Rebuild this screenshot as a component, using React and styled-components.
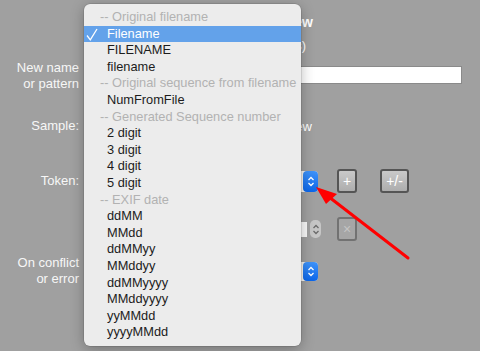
import React from 'react';
import styled, { createGlobalStyle } from 'styled-components';

const GlobalStyle = createGlobalStyle`
  html, body {
    margin: 0;
    padding: 0;
    background: #a0a0a0;
  }
`;

const Page = styled.div`
  position: relative;
  width: 480px;
  height: 351px;
  overflow: hidden;
  background: #a0a0a0;
  font-family: "Liberation Sans", Arial, sans-serif;
  font-size: 13px;
  color: #ffffff;
`;

const Dialog = styled.div`
  display: flex;
  flex-direction: column;
`;

const Row = styled.div`
  display: grid;
  grid-template-columns: 80px 1fr;
  column-gap: 10px;
  align-items: center;
  height: ${(p) => p.$h}px;
  margin-top: ${(p) => p.$mt}px;
`;

const Label = styled.div`
  text-align: right;
  padding-right: 1px;
  line-height: 16px;
  color: #f7f7f7;
`;

const Title = styled.div`
  width: 223px;
  text-align: right;
  font-weight: 700;
  font-size: 14px;
`;

const Sub = styled.div`
  width: 216px;
  text-align: right;
`;

const SampleText = styled.div`
  width: 222px;
  text-align: right;
`;

const TextInput = styled.div`
  align-self: start;
  margin-top: 6px;
  width: 372px;
  height: 18px;
  box-sizing: border-box;
  background: #ffffff;
  border: 1px solid #8a8a8a;
`;

const Controls = styled.div`
  display: flex;
  align-items: center;
`;

const Popup = styled.div`
  display: flex;
  justify-content: flex-end;
  width: 228px;
  height: ${(p) => p.$h}px;
  background: #fbf6ef;
  border-radius: 4px;
`;

const Stepper = styled.div`
  width: 15px;
  height: 100%;
  border-radius: 4px;
  background: linear-gradient(#3f93f9, #0b66ea);
  display: flex;
  align-items: center;
  justify-content: center;
`;

const Field = styled.div`
  width: 217px;
  height: 15px;
  background: #fafafa;
`;

const SmallStepper = styled.div`
  width: 11px;
  height: 18px;
  margin-left: 3px;
  border-radius: 5px;
  background: #c6c6c6;
  display: flex;
  align-items: center;
  justify-content: center;
`;

const Button = styled.div`
  width: ${(p) => p.$w}px;
  height: 24px;
  margin-left: ${(p) => p.$ml}px;
  box-sizing: border-box;
  border: 2px solid ${(p) => (p.$disabled ? '#727272' : '#555555')};
  border-radius: 3px;
  background: ${(p) => (p.$disabled ? '#a6a6a6' : 'linear-gradient(#c9c9c9, #adadad)')};
  color: ${(p) => (p.$disabled ? '#c4c4c4' : '#ffffff')};
  font-size: 14px;
  display: flex;
  align-items: center;
  justify-content: center;
`;

const Menu = styled.div`
  position: absolute;
  left: 84px;
  top: 4px;
  width: 217px;
  padding: 5px 0;
  background: #ececec;
  border-radius: 6px;
  box-shadow: 0 3px 14px rgba(0, 0, 0, 0.28), 0 0 0 0.5px rgba(0, 0, 0, 0.18);
`;

const Item = styled.div`
  position: relative;
  height: 16.6px;
  line-height: 16.6px;
  white-space: nowrap;
  padding-left: ${(p) => (p.$header ? 16 : 23)}px;
  color: ${(p) => (p.$header ? '#b2b2b2' : p.$selected ? '#ffffff' : '#1c1c1c')};
  background: ${(p) => (p.$selected ? '#63a2ea' : 'transparent')};
  font-size: 12.8px;
`;

const Check = styled.svg`
  position: absolute;
  left: 2px;
  top: 2px;
`;

const Overlay = styled.svg`
  position: absolute;
  left: 0;
  top: 0;
  pointer-events: none;
`;

const Chevrons = ({ color }) => (
  <svg width="8" height="13" viewBox="0 0 8 13">
    <path d="M1.5 5 L4 2.5 L6.5 5" fill="none" stroke={color} strokeWidth="1.3" />
    <path d="M1.5 8 L4 10.5 L6.5 8" fill="none" stroke={color} strokeWidth="1.3" />
  </svg>
);

const items = [
  { text: '-- Original filename', header: true },
  { text: 'Filename', selected: true },
  { text: 'FILENAME' },
  { text: 'filename' },
  { text: '-- Original sequence from filename', header: true },
  { text: 'NumFromFile' },
  { text: '-- Generated Sequence number', header: true },
  { text: '2 digit' },
  { text: '3 digit' },
  { text: '4 digit' },
  { text: '5 digit' },
  { text: '-- EXIF date', header: true },
  { text: 'ddMM' },
  { text: 'MMdd' },
  { text: 'ddMMyy' },
  { text: 'MMddyy' },
  { text: 'ddMMyyyy' },
  { text: 'MMddyyyy' },
  { text: 'yyMMdd' },
  { text: 'yyyyMMdd' },
];

const App = () => {
  return (
    <Page>
      <GlobalStyle />
      <Dialog>
        <Row $mt={11} $h={22}>
          <span />
          <Title>Rename Preview</Title>
        </Row>
        <Row $mt={1} $h={22}>
          <span />
          <Sub>(24 files)</Sub>
        </Row>
        <Row $mt={4} $h={32}>
          <Label>New name<br />or pattern</Label>
          <TextInput />
        </Row>
        <Row $mt={22} $h={24}>
          <Label>Sample:</Label>
          <SampleText>Preview</SampleText>
        </Row>
        <Row $mt={30} $h={26}>
          <Label>Token:</Label>
          <Controls>
            <Popup $h={21}>
              <Stepper><Chevrons color="#ffffff" /></Stepper>
            </Popup>
            <Button $w={20} $ml={19}>+</Button>
            <Button $w={29} $ml={23}>+/-</Button>
          </Controls>
        </Row>
        <Row $mt={22} $h={26}>
          <span />
          <Controls>
            <Field />
            <SmallStepper><Chevrons color="#6a6a6a" /></SmallStepper>
            <Button $w={20} $ml={16} $disabled>×</Button>
          </Controls>
        </Row>
        <Row $mt={13} $h={32}>
          <Label>On conflict<br />or error</Label>
          <Controls>
            <Popup $h={19}>
              <Stepper><Chevrons color="#ffffff" /></Stepper>
            </Popup>
          </Controls>
        </Row>
      </Dialog>

      <Menu>
        {items.map((it) => (
          <Item key={it.text} $header={it.header} $selected={it.selected}>
            {it.selected && (
              <Check width="12" height="13" viewBox="0 0 12 13">
                <path d="M1 7.5 L4.3 11.8 L11 1" fill="none" stroke="#ffffff" strokeWidth="1.3" />
              </Check>
            )}
            {it.text}
          </Item>
        ))}
      </Menu>

      <Overlay width="480" height="351" viewBox="0 0 480 351">
        <line x1="408" y1="258" x2="329" y2="197" stroke="#ff0000" strokeWidth="3" strokeLinecap="round" />
        <polygon points="316,187 326,204 337,194" fill="#ff0000" />
      </Overlay>
    </Page>
  );
};

export default App;
